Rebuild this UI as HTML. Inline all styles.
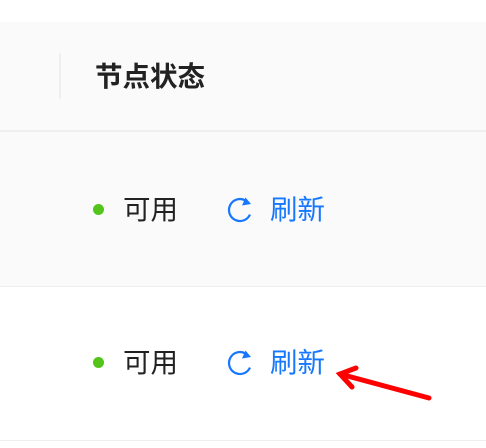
<!DOCTYPE html><html><head><style>
body{margin:0;width:486px;height:448px;background:#fff;position:relative;overflow:hidden;font-family:"Liberation Sans","Noto Sans CJK SC",sans-serif}
.a{position:absolute}
.t{font-size:27.5px;line-height:34px}
</style></head><body>
<div class="a" style="left:0;top:22px;width:486px;height:108px;background:#fafafa"></div>
<div class="a" style="left:0;top:130px;width:486px;height:2px;background:#efefef"></div>
<div class="a" style="left:59px;top:53px;width:2px;height:46px;background:#efefef"></div>
<div class="a" style="left:95px;top:60px;font-size:27.5px;font-weight:bold;color:#222;line-height:34px">节点状态</div>
<div class="a" style="left:0;top:132px;width:486px;height:154px;background:#fafafa"></div>
<div class="a" style="left:0;top:286px;width:486px;height:1px;background:#eee"></div>
<div class="a" style="left:0;top:440px;width:486px;height:1px;background:#eee"></div>

<div class="a" style="left:93px;top:204px;width:11px;height:11px;border-radius:50%;background:#52c41a"></div>
<div class="a t" style="left:123px;top:193px;color:#222">可用</div>
<svg class="a" style="left:226px;top:196px" width="28" height="28" viewBox="0 0 28 28"><path d="M19.5 4.5A11 11 0 1 0 24 18.6" fill="none" stroke="#1677ff" stroke-width="2.2"/><path d="M25 8L16 9.5L19.5 1.5Z" fill="#1677ff"/></svg>
<div class="a t" style="left:270px;top:193px;color:#1677ff">刷新</div>

<div class="a" style="left:93px;top:357px;width:11px;height:11px;border-radius:50%;background:#52c41a"></div>
<div class="a t" style="left:123px;top:346px;color:#222">可用</div>
<svg class="a" style="left:226px;top:349px" width="28" height="28" viewBox="0 0 28 28"><path d="M19.5 4.5A11 11 0 1 0 24 18.6" fill="none" stroke="#1677ff" stroke-width="2.2"/><path d="M25 8L16 9.5L19.5 1.5Z" fill="#1677ff"/></svg>
<div class="a t" style="left:270px;top:346px;color:#1677ff">刷新</div>

<svg class="a" style="left:0;top:0" width="486" height="448"><g stroke="#f00" stroke-width="5" stroke-linecap="round" fill="none"><path d="M429 398L340 374"/><path d="M356 368L340 374L352 387"/></g></svg>
</body></html>
